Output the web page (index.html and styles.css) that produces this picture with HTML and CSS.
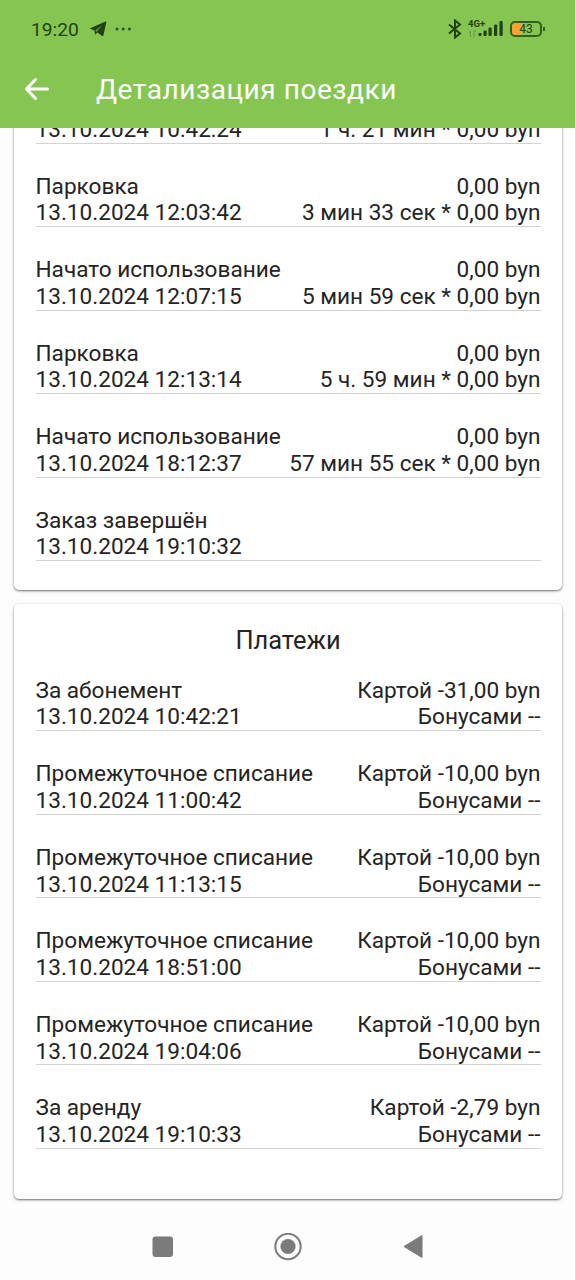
FILE: index.html
```html
<!DOCTYPE html>
<html lang="ru">
  <head>
    <meta charset="UTF-8" />
    <meta name="viewport" content="width=device-width, initial-scale=1.0" />
    <title>Детализация поездки</title>
    <link rel="stylesheet" href="styles.css">
  </head>
  <body>
    <header>
      <div class="status-bar">
        <span class="time">19:20</span>
        <svg class="telegram" width="18" height="16" viewBox="0 0 18 16">
          <path d="M.7 7.6 16.4.6q1-.3.9.8L14.5 14q-.3 1.5-1.6.8L8.3 11.5 6 13.8 5.4 9.5Z" fill="#1f4313" />
          <path d="M6 9.8 13 4.2 7.4 11Z" fill="#6ba144" />
        </svg>
        <svg class="dots" width="18" height="4" viewBox="0 0 18 4" fill="#2d5a1b">
          <circle cx="2" cy="2" r="1.5" />
          <circle cx="8.2" cy="2" r="1.5" />
          <circle cx="14.4" cy="2" r="1.5" />
        </svg>
        <div class="status-icons">
          <svg width="14" height="20" viewBox="0 0 14 20" fill="none" stroke="#1f4313" stroke-width="2">
            <path d="M1 5.5 12 14.5 7 18.5V1.5L12 5.5 1 14.5" />
          </svg>
          <div class="network">
            <span class="network-type">4G+</span>
            <svg width="36" height="20" viewBox="0 0 36 20">
              <path d="M2.5 18v-6l-1.5 2M6 12v6M6 12h2" stroke="#67983f" fill="none" />
              <g fill="#1f4313">
                <rect x="10.5" y="14" width="3" height="3" rx="1" />
                <rect x="15.5" y="11.5" width="3.2" height="5.5" rx="1" />
                <rect x="20.5" y="8.5" width="3.2" height="8.5" rx="1" />
                <rect x="26" y="5.5" width="3.2" height="11.5" rx="1" />
                <rect x="31.5" y="2" width="3.2" height="15" rx="1" />
              </g>
            </svg>
          </div>
          <div class="battery">43</div>
        </div>
      </div>
      <div class="app-bar">
        <svg width="26" height="24" viewBox="0 0 26 24" fill="none" stroke="#fff" stroke-width="3" stroke-linecap="round" stroke-linejoin="round">
          <path d="M23.5 12H3M11.5 2.5 2.5 12l9 9.5" />
        </svg>
        <h1>Детализация поездки</h1>
      </div>
    </header>

    <main>
      <section class="card trip">
        <div class="row row-short">
          <div><p>13.10.2024 10:42:24</p></div>
          <div class="amount"><p>1 ч. 21 мин * 0,00 byn</p></div>
        </div>
        <div class="row">
          <div><p>Парковка</p><p>13.10.2024 12:03:42</p></div>
          <div class="amount"><p>0,00 byn</p><p>3 мин 33 сек * 0,00 byn</p></div>
        </div>
        <div class="row">
          <div><p>Начато использование</p><p>13.10.2024 12:07:15</p></div>
          <div class="amount"><p>0,00 byn</p><p>5 мин 59 сек * 0,00 byn</p></div>
        </div>
        <div class="row">
          <div><p>Парковка</p><p>13.10.2024 12:13:14</p></div>
          <div class="amount"><p>0,00 byn</p><p>5 ч. 59 мин * 0,00 byn</p></div>
        </div>
        <div class="row">
          <div><p>Начато использование</p><p>13.10.2024 18:12:37</p></div>
          <div class="amount"><p>0,00 byn</p><p>57 мин 55 сек * 0,00 byn</p></div>
        </div>
        <div class="row">
          <div><p>Заказ завершён</p><p>13.10.2024 19:10:32</p></div>
        </div>
      </section>

      <section class="card payments">
        <h2>Платежи</h2>
        <div class="row">
          <div><p>За абонемент</p><p>13.10.2024 10:42:21</p></div>
          <div class="amount"><p>Картой -31,00 byn</p><p>Бонусами --</p></div>
        </div>
        <div class="row">
          <div><p>Промежуточное списание</p><p>13.10.2024 11:00:42</p></div>
          <div class="amount"><p>Картой -10,00 byn</p><p>Бонусами --</p></div>
        </div>
        <div class="row">
          <div><p>Промежуточное списание</p><p>13.10.2024 11:13:15</p></div>
          <div class="amount"><p>Картой -10,00 byn</p><p>Бонусами --</p></div>
        </div>
        <div class="row">
          <div><p>Промежуточное списание</p><p>13.10.2024 18:51:00</p></div>
          <div class="amount"><p>Картой -10,00 byn</p><p>Бонусами --</p></div>
        </div>
        <div class="row">
          <div><p>Промежуточное списание</p><p>13.10.2024 19:04:06</p></div>
          <div class="amount"><p>Картой -10,00 byn</p><p>Бонусами --</p></div>
        </div>
        <div class="row">
          <div><p>За аренду</p><p>13.10.2024 19:10:33</p></div>
          <div class="amount"><p>Картой -2,79 byn</p><p>Бонусами --</p></div>
        </div>
      </section>
    </main>

    <nav>
      <svg width="28" height="28" viewBox="0 0 28 28" fill="#7b7b7b">
        <rect x="4.5" y="3.5" width="20.5" height="20.5" rx="3" />
      </svg>
      <svg width="28" height="28" viewBox="0 0 28 28">
        <circle cx="14" cy="13.5" r="12.7" fill="none" stroke="#7b7b7b" stroke-width="2" />
        <circle cx="14" cy="13.5" r="7.6" fill="#7b7b7b" />
      </svg>
      <svg width="28" height="28" viewBox="0 0 28 28" fill="#7b7b7b" stroke="#7b7b7b" stroke-linejoin="round">
        <path d="M5 13.5 23 2.5v22Z" />
      </svg>
    </nav>
  </body>
</html>
```
FILE: styles.css
```css
* {
  box-sizing: border-box;
}
body {
  margin: 0;
  height: 1280px;
  display: flex;
  flex-direction: column;
  overflow: hidden;
  background: #fdfdfd;
  border-right: 1px solid #dcdcdc;
  color: #242424;
  font-family: Roboto, sans-serif;
  font-size: 22.6px;
}
h1,
h2,
p {
  margin: 0;
  font-weight: 400;
}
svg {
  display: block;
}

header {
  flex: none;
  height: 128px;
  background: #86c552;
  margin-right: -1px;
}
.status-bar {
  height: 56px;
  padding: 2px 34px 0 31px;
  display: flex;
  align-items: center;
  color: #1f4313;
}
.time {
  font-size: 19.2px;
}
.telegram {
  margin-left: 10px;
}
.dots {
  margin-left: 8px;
}
.status-icons {
  margin-left: auto;
  display: flex;
  align-items: center;
  gap: 6px;
}
.network {
  position: relative;
}
.network-type {
  position: absolute;
  left: 0;
  top: 0;
  font-size: 9.5px;
  line-height: 9px;
  font-weight: 700;
}
.battery {
  position: relative;
  width: 32px;
  height: 16px;
  border: 2px solid #31611f;
  border-radius: 5px;
  background: linear-gradient(90deg, #f5a52b 36%, transparent 36%);
  font-size: 12px;
  line-height: 13px;
  text-align: center;
}
.battery::after {
  content: "";
  position: absolute;
  right: -5px;
  top: 4px;
  width: 2px;
  height: 4px;
  background: #31611f;
}
.app-bar {
  height: 66px;
  padding-left: 24px;
  display: flex;
  align-items: center;
  gap: 46px;
  color: #fff;
}
h1 {
  font-size: 28px;
  letter-spacing: 0.55px;
}

main {
  flex: 1;
  min-height: 0;
  overflow: hidden;
  padding: 0 13px 0 14px;
}
.card {
  padding: 0 21.5px;
  background: #fff;
  border-radius: 5px;
  box-shadow: 0 1px 2px rgba(0, 0, 0, 0.5), 0 1px 5px rgba(0, 0, 0, 0.1);
}
/* scrolled up under the app bar */
.trip {
  height: 474.4px;
  margin-top: -12.4px;
}
.payments {
  height: 595px;
  margin-top: 14px;
  padding-top: 21px;
}
h2 {
  margin-bottom: 21.7px;
  font-size: 25.4px;
  line-height: 30px;
  text-align: center;
}
.row {
  height: 54.6px;
  margin-bottom: 28.95px;
  display: flex;
  justify-content: space-between;
  line-height: 26.8px;
  border-bottom: 1px solid #d2d2d2;
}
.row-short {
  height: 28px;
}
.row p {
  padding-top: 1px;
  margin-bottom: -1px;
}
.amount {
  text-align: right;
}

nav {
  flex: none;
  height: 66px;
  padding: 0 148px;
  display: flex;
  align-items: center;
  justify-content: space-between;
}
```
